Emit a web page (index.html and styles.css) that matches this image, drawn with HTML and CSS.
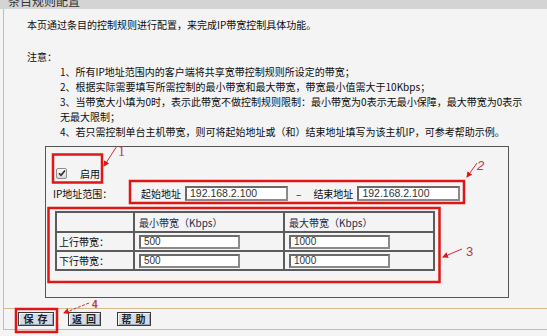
FILE: index.html
```html
<!DOCTYPE html>
<html lang="zh-CN">
<head>
  <meta charset="UTF-8" />
  <title>条目规则配置</title>
  <link rel="stylesheet" href="styles.css">
</head>
<body>

  <div class="title"><span>条目规则配置</span></div>

  <div class="frame">
    <div class="main">
      <p class="intro">本页通过条目的控制规则进行配置，来完成IP带宽控制具体功能。</p>
      <p class="note-title">注意：</p>
      <ul class="notes">
        <li>1、所有IP地址范围内的客户端将共享宽带控制规则所设定的带宽；</li>
        <li>2、根据实际需要填写所需控制的最小带宽和最大带宽，带宽最小值需大于10Kbps；</li>
        <li>3、当带宽大小填为0时，表示此带宽不做控制规则限制：最小带宽为0表示无最小保障，最大带宽为0表示无最大限制；</li>
        <li>4、若只需控制单台主机带宽，则可将起始地址或（和）结束地址填写为该主机IP，可参考帮助示例。</li>
      </ul>

      <div class="rule-box">
        <label class="enable-row">
          <span class="check">
            <svg width="8" height="8" viewBox="0 0 8 8"><path d="M1 4.2 L3 6.3 L7 1.5" fill="none" stroke="#2b2b2b" stroke-width="1.6"/></svg>
          </span>
          <span>启用</span>
        </label>

        <div class="ip-row">
          <span class="ip-label">IP地址范围：</span>
          <span>起始地址</span>
          <input class="ip-input" type="text" value="192.168.2.100" />
          <span class="dash">–</span>
          <span>结束地址</span>
          <input class="ip-input" type="text" value="192.168.2.100" />
        </div>

        <table class="bw-table">
          <tr class="head-row">
            <th class="col-name"></th>
            <th class="col-val">最小带宽（Kbps）</th>
            <th class="col-val">最大带宽（Kbps）</th>
          </tr>
          <tr>
            <td>上行带宽：</td>
            <td><input class="bw-input" type="text" value="500" /></td>
            <td><input class="bw-input" type="text" value="1000" /></td>
          </tr>
          <tr>
            <td>下行带宽：</td>
            <td><input class="bw-input" type="text" value="500" /></td>
            <td><input class="bw-input" type="text" value="1000" /></td>
          </tr>
        </table>
      </div>
    </div>

    <div class="footer">
      <button class="btn btn-save">保存</button>
      <button class="btn btn-back">返回</button>
      <button class="btn btn-help">帮助</button>
    </div>
  </div>

  <!-- 标注 -->
  <svg class="marks" width="547" height="336" viewBox="0 0 547 336">
    <defs>
      <marker id="head" markerWidth="6" markerHeight="6" refX="5" refY="3" orient="auto">
        <path d="M0 0 L6 3 L0 6 Z" fill="#e01515"/>
      </marker>
    </defs>
    <g fill="none" stroke="#e01515" stroke-width="2.5">
      <rect x="53" y="154.5" width="49" height="28"/>
      <rect x="130" y="181" width="334" height="22"/>
      <rect x="48.5" y="208" width="391" height="74"/>
      <rect x="16" y="309" width="41" height="23"/>
    </g>
    <g stroke="#d42a35" stroke-width="1" marker-end="url(#head)">
      <line x1="117" y1="146" x2="104" y2="166"/>
      <line x1="477" y1="163" x2="467" y2="177"/>
      <line x1="462" y1="249" x2="443" y2="257"/>
      <line x1="89" y1="303" x2="64" y2="313" stroke-dasharray="3 1.5"/>
    </g>
    <g fill="#c23545">
      <text x="118" y="156" class="mark-num serif">1</text>
      <text x="477" y="170" class="mark-num italic">2</text>
      <text x="466" y="256" class="mark-num">3</text>
      <text x="92" y="308" class="mark-small">4</text>
    </g>
  </svg>

</body>
</html>
```

FILE: styles.css
```css
body {
  margin: 0;
  width: 547px;
  height: 336px;
  overflow: hidden;
  position: relative;
  background-color: #f4f4f4;
  font-family: "Noto Sans CJK SC", "Liberation Sans", sans-serif;
  font-size: 10px;
  color: #0d0d0d;
}

.title {
  height: 9px;
  background-color: #d4d4d4;
  overflow: hidden;
}

.title span {
  display: block;
  margin-top: -7px;
  padding-left: 8px;
  font-size: 12px;
  line-height: 15px;
  color: #333;
}

.frame {
  margin-left: 3px;
  border-left: 1px solid #d9b98c;
}

.main {
  padding: 8px 0 10px;
}

.intro, .note-title {
  margin: 0 0 0 23px;
  line-height: 15px;
}

.note-title {
  margin-top: 17px;
}

.notes {
  list-style: none;
  margin: 0 22px 0 56px;
  padding: 0;
  line-height: 15px;
}

.rule-box {
  margin: 7px 0 0 41px;
  width: 462px;
  padding: 18px 0 26px;
  border: 1px solid #555;
}

.enable-row {
  display: flex;
  align-items: center;
  height: 16px;
  padding-left: 10px;
}

.check {
  display: flex;
  align-items: center;
  justify-content: center;
  width: 9px;
  height: 9px;
  margin-right: 13px;
  border: 1px solid #8d8d8d;
  border-radius: 2px;
  background: linear-gradient(#fdfdfd, #d8d8d8);
}

.ip-row {
  display: flex;
  align-items: center;
  height: 16px;
  margin-top: 4px;
  padding-left: 7px;
}

.ip-label {
  width: 88px;
}

.dash {
  margin: 0 12px 0 8px;
}

.ip-input, .bw-input {
  box-sizing: border-box;
  border: 2px solid #6a6a6a;
  border-bottom-color: #8a8a8a;
  border-right-color: #8a8a8a;
  background: #fff;
  padding: 0 0 0 3px;
  font-family: "Liberation Sans", Arial, sans-serif;
  color: #333;
  outline: none;
}

.ip-input {
  width: 103px;
  height: 15px;
  margin-left: 4px;
  font-size: 10.5px;
}

.bw-table {
  margin: 10px 0 0 9px;
  width: 380px;
  border-collapse: collapse;
  table-layout: fixed;
}

.bw-table th, .bw-table td {
  border: 2px solid #5b5b5b;
  padding: 0 2px;
  text-align: left;
  font-weight: normal;
  height: 17px;
}

.bw-table th {
  color: #23284a;
  height: 18px;
}

.bw-table td + td, .bw-table th + th {
  padding-left: 4px;
}

.col-name {
  width: 72px;
}

.bw-input {
  display: block;
  width: 101px;
  height: 14px;
  font-size: 10px;
}

.footer {
  display: flex;
  gap: 14px;
  padding: 3px 0 3px 14px;
  border-top: 1px solid #d9b98c;
  border-bottom: 1px solid #d9b98c;
}

.btn {
  height: 14px;
  padding: 0 0 0 3px;
  border: 1px solid #3a3a3a;
  box-shadow: inset 1px 1px 0 #f4f7fb, inset -1px -1px 0 #9aa6b6;
  background-color: #d3dbe7;
  font-family: "Noto Sans CJK SC", sans-serif;
  font-size: 10px;
  font-weight: bold;
  line-height: 12px;
  letter-spacing: 4px;
  color: #222;
}

.btn-save { width: 36px; }
.btn-back { width: 33px; }
.btn-help { width: 34px; margin-left: 2px; }

.marks {
  position: absolute;
  top: 0;
  left: 0;
  pointer-events: none;
}

.mark-num {
  font-family: "Liberation Sans", sans-serif;
  font-size: 13px;
}

.mark-num.serif {
  font-family: "Liberation Serif", serif;
  font-size: 14px;
}

.mark-num.italic {
  font-style: italic;
}

.mark-small {
  font-family: "Liberation Sans", sans-serif;
  font-size: 10px;
  font-weight: bold;
}
```
